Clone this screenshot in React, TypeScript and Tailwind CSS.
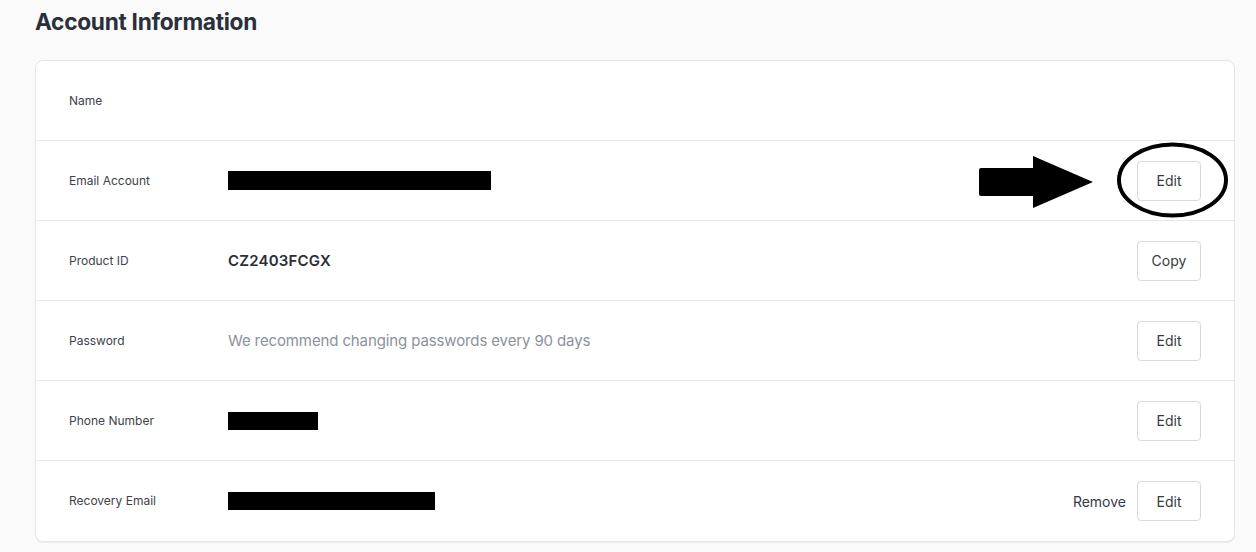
import React from 'react';

type Row = {
  label: string;
  value?: React.ReactNode;
  actions?: string[];
  remove?: boolean;
};

const rows: Row[] = [
  { label: 'Name' },
  { label: 'Email Account', value: <div className="h-[19px] w-[263px] bg-black" />, actions: ['Edit'] },
  {
    label: 'Product ID',
    value: <span className="text-[15px] font-semibold tracking-[0.2px] text-[#2b2f36]">CZ2403FCGX</span>,
    actions: ['Copy'],
  },
  {
    label: 'Password',
    value: (
      <span className="text-[15px] tracking-[-0.12px] text-[#8b929c]">
        We recommend changing passwords every 90 days
      </span>
    ),
    actions: ['Edit'],
  },
  { label: 'Phone Number', value: <div className="h-[18px] w-[90px] bg-black" />, actions: ['Edit'] },
  {
    label: 'Recovery Email',
    value: <div className="h-[18px] w-[207px] bg-black" />,
    actions: ['Edit'],
    remove: true,
  },
];

function ActionButton({ children }: { children: React.ReactNode }) {
  return (
    <button className="flex h-10 w-16 items-center justify-center rounded-[4px] border border-[#d6d9de] bg-white text-[14px] text-[#353a44]">
      {children}
    </button>
  );
}

export default function App() {
  return (
    <div
      className="relative min-h-screen bg-[#fafafa] pt-[6px] pr-[21px] pb-4 pl-[35px]"
      style={{ fontFamily: 'Inter, "Noto Sans", sans-serif' }}
    >
      <h1 className="text-[22.7px] leading-8 font-bold tracking-[-0.3px] text-[#2a303b]">Account Information</h1>

      <div className="mt-[22px] rounded-lg border border-[#e4e6ea] bg-white shadow-[0_1px_1px_rgba(0,0,0,0.06)]">
        {rows.map((row, i) => (
          <div
            key={row.label}
            className={`flex h-20 items-center px-[33px] ${i < rows.length - 1 ? 'border-b border-[#e7e8eb]' : ''}`}
          >
            <div className="w-[159px] shrink-0 text-[12px] text-[#3d424c]">{row.label}</div>
            <div className="flex-1">{row.value}</div>
            <div className="flex items-center gap-[11px]">
              {row.remove && <span className="text-[14px] text-[#353a44]">Remove</span>}
              {row.actions?.map((a) => (
                <ActionButton key={a}>{a}</ActionButton>
              ))}
            </div>
          </div>
        ))}
      </div>

      {/* Annotation: arrow + circle around the Email Edit button */}
      <svg className="pointer-events-none absolute top-0 left-0" width="1256" height="552">
        <path
          d="M981 168 L1033 168 L1033 156 L1093 182 L1033 208 L1033 196 L981 196 Q979 196 979 194 L979 170 Q979 168 981 168 Z"
          fill="#000"
        />
        <ellipse cx="1172.5" cy="180" rx="53.5" ry="35.5" fill="none" stroke="#000" strokeWidth="4" />
      </svg>
    </div>
  );
}
